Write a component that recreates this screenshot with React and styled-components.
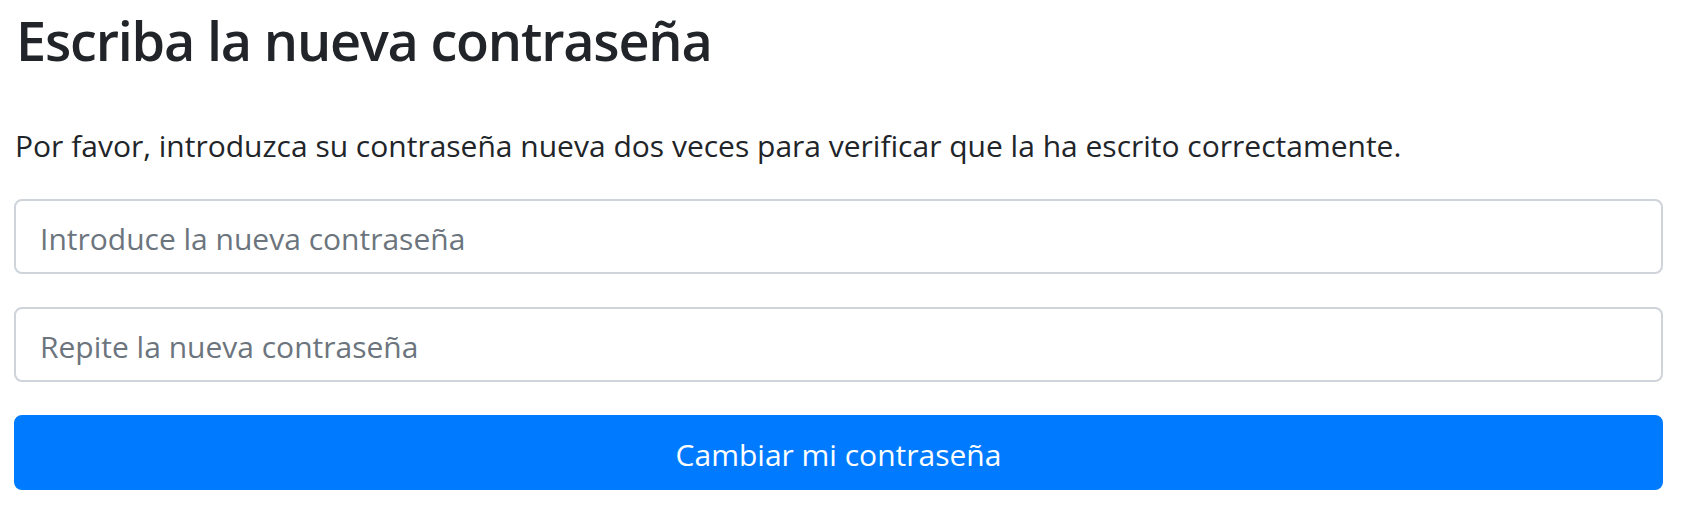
import React from "react";
import styled, { createGlobalStyle } from "styled-components";

const GlobalStyle = createGlobalStyle`
  html, body {
    margin: 0;
    padding: 0;
    background: #fff;
  }
  body {
    font-family: "Open Sans", Roboto, "Liberation Sans", sans-serif;
    color: #212529;
  }
  * {
    box-sizing: border-box;
  }
`;

const Page = styled.div`
  padding: 4px 20px 0 14px;
`;

const Title = styled.h2`
  margin: 0 0 0 2px;
  font-size: 54px;
  font-weight: 600;
  letter-spacing: -1.2px;
  line-height: 72px;
  color: #212529;
`;

const Lead = styled.p`
  margin: 47px 0 31px 1px;
  font-size: 30px;
  line-height: 45px;
`;

const Form = styled.form`
  display: flex;
  flex-direction: column;
  gap: 33px;
`;

const Field = styled.input`
  display: block;
  width: 100%;
  height: 75px;
  padding: 3px 24px 0;
  font-family: inherit;
  font-size: 30px;
  color: #495057;
  background: #fff;
  border: 2px solid #ced4da;
  border-radius: 8px;
  outline: none;

  &::placeholder {
    color: #6c757d;
    opacity: 1;
  }
`;

const Submit = styled.button`
  display: block;
  width: 100%;
  height: 75px;
  padding: 3px 0 0;
  font-family: inherit;
  font-size: 30px;
  color: #fff;
  background: #007bff;
  border: 2px solid #007bff;
  border-radius: 8px;
  cursor: pointer;
`;

export default function App() {
  return (
    <>
      <GlobalStyle />
      <Page>
        <Title>Escriba la nueva contraseña</Title>
        <Lead>
          Por favor, introduzca su contraseña nueva dos veces para verificar que
          la ha escrito correctamente.
        </Lead>
        <Form onSubmit={e => e.preventDefault()}>
          <Field type="password" placeholder="Introduce la nueva contraseña" />
          <Field type="password" placeholder="Repite la nueva contraseña" />
          <Submit type="submit">Cambiar mi contraseña</Submit>
        </Form>
      </Page>
    </>
  );
}
